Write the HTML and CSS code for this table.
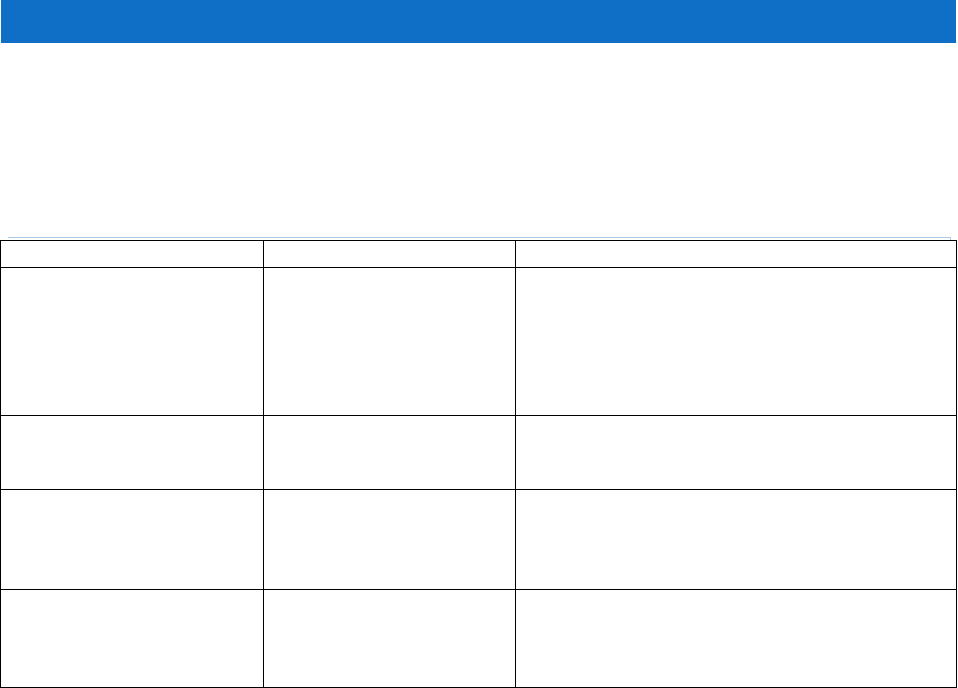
FILE: index.html
```html
<!DOCTYPE html>
<html lang="en">
<head>
  <meta charset="UTF-8">
  <meta name="viewport" content="width=device-width, initial-scale=1.0">
  <title>Document</title>
  <link rel="stylesheet" href="styles.css">
</head>
<body>
  <div class="banner"></div>

  <div class="rule"></div>

  <table class="grid">
    <colgroup>
      <col class="c1">
      <col class="c2">
      <col class="c3">
    </colgroup>
    <tr class="r-head"><td></td><td></td><td></td></tr>
    <tr class="r-1"><td></td><td></td><td></td></tr>
    <tr class="r-2"><td></td><td></td><td></td></tr>
    <tr class="r-3"><td></td><td></td><td></td></tr>
    <tr class="r-4"><td></td><td></td><td></td></tr>
  </table>
</body>
</html>
```

FILE: styles.css
```css
html, body {
  margin: 0;
  padding: 0;
  background: #fff;
  font-family: "Liberation Sans", Arial, sans-serif;
}
.banner {
  margin-left: 1px;
  width: 955px;
  height: 43px;
  background-color: #0f6fc6;
}
.rule {
  margin: 194px 0 0 8px;
  width: 942px;
  height: 2px;
  border-top: 1px solid #a8cbec;
  border-right: 1px solid #a8cbec;
}
.grid {
  margin-top: 0;
  border-collapse: collapse;
  table-layout: fixed;
  width: 957px;
}
.grid td {
  border: 1px solid #000;
  padding: 0;
}
.c1 { width: 263px; }
.c2 { width: 252px; }
.c3 { width: 441px; }
.r-head td { height: 26px; }
.r-1 td { height: 147px; }
.r-2 td { height: 73px; }
.r-3 td { height: 99px; }
.r-4 td { height: 97px; }
```
